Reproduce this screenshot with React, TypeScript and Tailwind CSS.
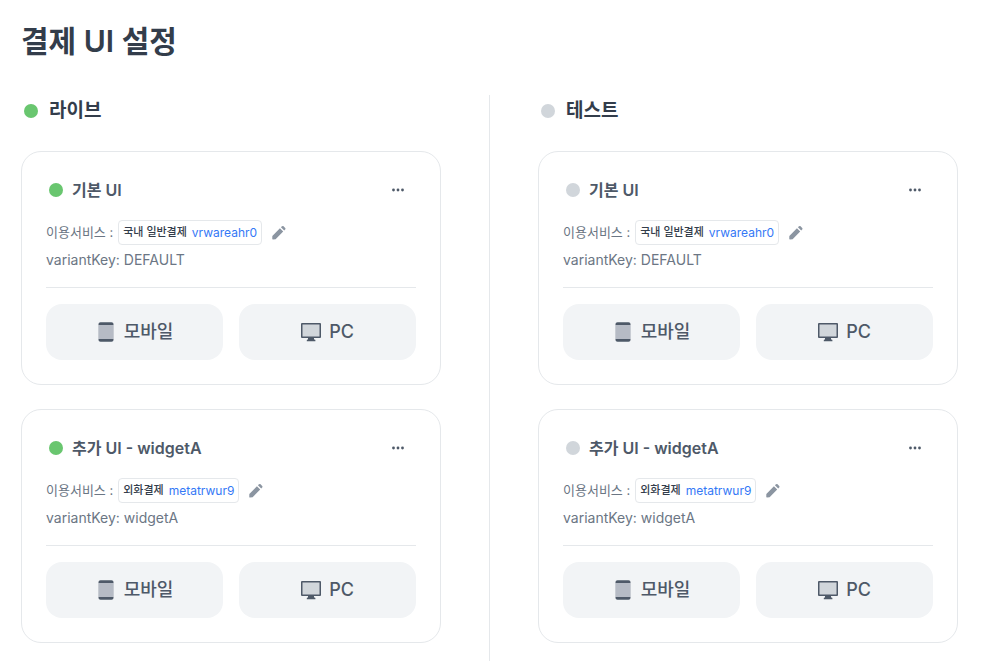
import React from "react";

interface Variant {
  name: string;
  service: string;
  mid: string;
  variantKey: string;
}

const variants: Variant[] = [
  {
    name: "기본 UI",
    service: "국내 일반결제",
    mid: "vrwareahr0",
    variantKey: "DEFAULT",
  },
  {
    name: "추가 UI - widgetA",
    service: "외화결제",
    mid: "metatrwur9",
    variantKey: "widgetA",
  },
];

const StatusDot: React.FC<{ live: boolean }> = ({ live }) => (
  <span
    className={
      live
        ? "h-3.5 w-3.5 shrink-0 rounded-full bg-[#69c66f]"
        : "h-3.5 w-3.5 shrink-0 rounded-full bg-[#d1d6db]"
    }
  />
);

const PencilIcon = () => (
  <svg viewBox="0 0 24 24" fill="#8b95a1" className="h-4 w-4">
    <path d="M2 16.4L13.4 5l4.9 4.9L6.9 21.3l-3.8.6c-.7.1-1.3-.5-1.2-1.2z" />
    <path d="M14.9 3.5l1.5-1.5a1.8 1.8 0 012.5 0l2.4 2.4a1.8 1.8 0 010 2.5l-1.5 1.5z" />
  </svg>
);

const MoreIcon = () => (
  <svg viewBox="0 0 20 20" fill="#4e5968" className="h-5 w-5">
    <circle cx="5.5" cy="10" r="1.4" />
    <circle cx="10" cy="10" r="1.4" />
    <circle cx="14.5" cy="10" r="1.4" />
  </svg>
);

const MobileIcon = () => (
  <svg viewBox="0 0 20 20" className="h-5 w-5">
    <path d="M2.5 3V2Q2.5 .2 4.5 .2h11q2 0 2 1.8v1z" fill="#4e5968" />
    <path d="M2.5 17v1q0 1.8 2 1.8h11q2 0 2-1.8v-1z" fill="#4e5968" />
    <path d="M2.3 3h15.4v14H2.3z" fill="#b6bbc5" />
  </svg>
);

const PcIcon = () => (
  <svg viewBox="0 0 20 20" className="h-5 w-5">
    <path d="M7 15h6v2.5h.6q.8 0 .8 .8v1H5.8v-1q0-.8 .8-.8H7z" fill="#4e5968" />
    <rect x="0" y="1" width="20" height="15" rx="1" fill="#4e5968" />
    <rect x="1.5" y="2.5" width="17" height="12" fill="#d1d6db" />
  </svg>
);

interface CardProps {
  variant: Variant;
  live: boolean;
}

const VariantCard: React.FC<CardProps> = ({ variant, live }) => {
  return (
    <li className="rounded-[20px] border border-[#e5e8eb] p-6">
      <div className="flex h-7 items-center justify-between pr-2 pl-[3px]">
        <h3 className="flex items-center gap-[9px] text-base leading-7 font-semibold text-[#4e5968]">
          <StatusDot live={live} />
          {variant.name}
        </h3>
        <button type="button" aria-label="더보기">
          <MoreIcon />
        </button>
      </div>

      <div className="mt-4 flex items-center text-[13px] text-[#6b7684]">
        <span>이용서비스 :</span>
        <span className="ml-[5px] flex h-[25px] items-center gap-[5px] rounded border border-[#e5e8eb] px-1 text-[11px] font-medium text-[#333d4b]">
          {variant.service}
          <a href="#" className="text-xs font-normal text-[#3478f6]">
            {variant.mid}
          </a>
        </span>
        <button type="button" aria-label="수정" className="ml-[9px]">
          <PencilIcon />
        </button>
      </div>
      <p className="mt-[5px] text-sm leading-5 text-[#6b7684]">
        variantKey: {variant.variantKey}
      </p>

      <div className="mt-[17px] grid grid-cols-2 gap-4 border-t border-[#e5e8eb] pt-4">
        <button
          type="button"
          className="flex h-14 items-center justify-center gap-2 rounded-2xl bg-[#f2f4f6] text-lg leading-7 font-medium text-[#4e5968]"
        >
          <MobileIcon />
          모바일
        </button>
        <button
          type="button"
          className="flex h-14 items-center justify-center gap-2 rounded-2xl bg-[#f2f4f6] text-lg leading-7 font-medium text-[#4e5968]"
        >
          <PcIcon />
          PC
        </button>
      </div>
    </li>
  );
};

interface ColumnProps {
  title: string;
  live: boolean;
  className: string;
}

const Column: React.FC<ColumnProps> = ({ title, live, className }) => {
  return (
    <section className={className}>
      <h2 className="flex h-8 items-center gap-[11px] pl-[3px] text-[19px] leading-8 font-semibold text-[#333d4b]">
        <StatusDot live={live} />
        {title}
      </h2>
      <ul className="mt-6 flex flex-col gap-6">
        {variants.map((variant) => (
          <VariantCard key={variant.variantKey} variant={variant} live={live} />
        ))}
      </ul>
    </section>
  );
};

export default function App() {
  return (
    <main className="flex min-h-screen flex-col bg-white pt-5 pr-10 pl-[21px] font-['Inter','Noto_Sans_CJK_KR',sans-serif]">
      <h1 className="mb-[33px] text-3xl leading-[42px] font-semibold text-[#333d4b]">
        결제 UI 설정
      </h1>
      <div className="flex flex-1">
        <Column title="라이브" live={true} className="min-w-0 flex-1 pr-12" />
        <div className="w-px bg-[#e5e8eb]" />
        <Column title="테스트" live={false} className="min-w-0 flex-1 pl-12" />
      </div>
    </main>
  );
}
